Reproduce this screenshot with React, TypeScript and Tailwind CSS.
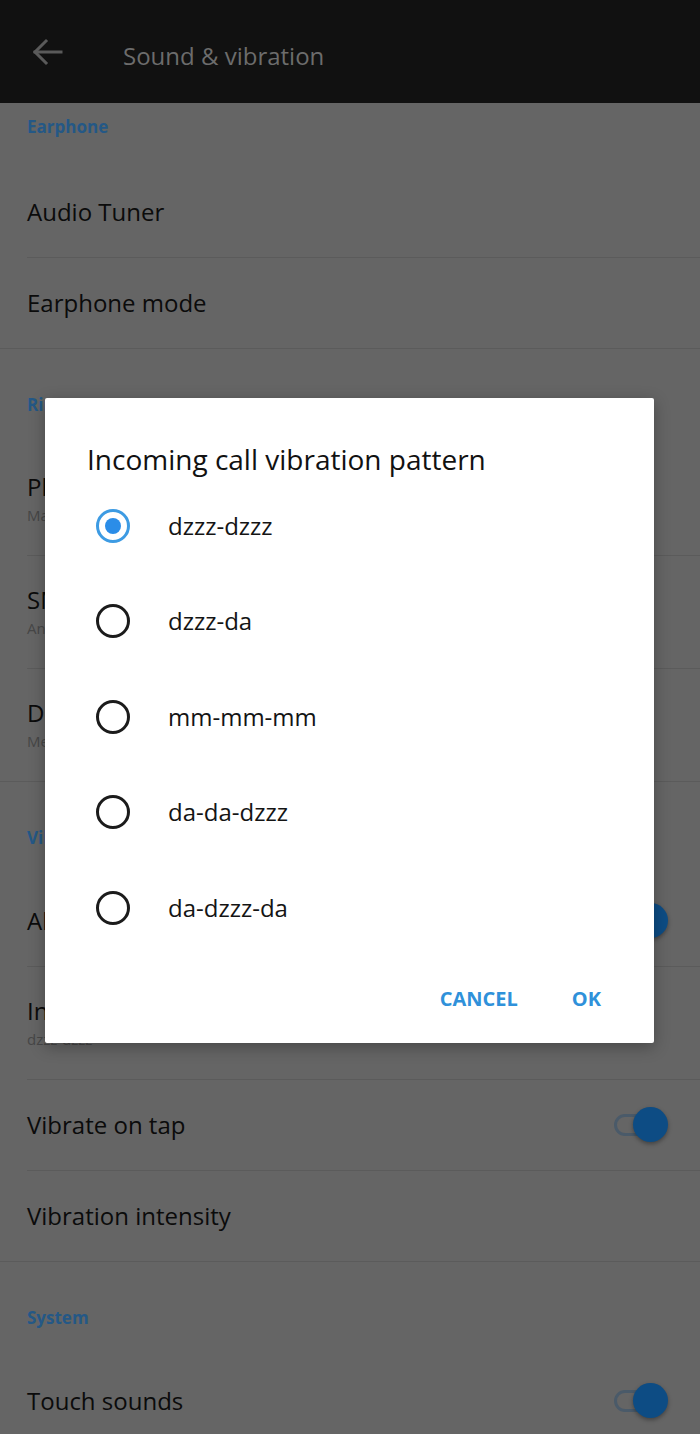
import React from "react";

type Row = {
  id: string;
  title: string;
  sub?: string;
  toggle?: boolean;
};

type Section = {
  id: string;
  name: string;
  first?: boolean;
  rows: Row[];
};

const sections: Section[] = [
  {
    id: "earphone",
    name: "Earphone",
    first: true,
    rows: [
      { id: "tuner", title: "Audio Tuner" },
      { id: "mode", title: "Earphone mode" },
    ],
  },
  {
    id: "ringtone",
    name: "Ringtone",
    rows: [
      { id: "phone", title: "Phone ringtone", sub: "Material" },
      { id: "sms", title: "SMS ringtone", sub: "Antic" },
      { id: "notif", title: "Default notification sound", sub: "Meet" },
    ],
  },
  {
    id: "vibrate",
    name: "Vibrate",
    rows: [
      { id: "also", title: "Also vibrate for calls", toggle: true },
      { id: "pattern", title: "Incoming call vibration pattern", sub: "dzzz-dzzz" },
      { id: "tap", title: "Vibrate on tap", toggle: true },
      { id: "intensity", title: "Vibration intensity" },
    ],
  },
  {
    id: "system",
    name: "System",
    rows: [{ id: "touch", title: "Touch sounds", toggle: true }],
  },
];

const patterns = ["dzzz-dzzz", "dzzz-da", "mm-mm-mm", "da-da-dzzz", "da-dzzz-da"];

// dimmed switch, as seen behind the scrim
const Toggle = () => (
  <div className="relative w-[54px] h-[36px] flex items-center">
    <div className="w-[40px] h-[22px] rounded-full border-[3px] border-[#4a5a69]" />
    <div className="absolute right-0 top-0 w-[35px] h-[35px] rounded-full bg-[#0d4c84] shadow-[0_2px_4px_rgba(0,0,0,0.35)]" />
  </div>
);

const Radio: React.FC<{ checked?: boolean }> = ({ checked }) =>
  checked ? (
    <div className="w-[34px] h-[34px] rounded-full border-[3.5px] border-[#3d9be3] flex items-center justify-center">
      <div className="w-[16px] h-[16px] rounded-full bg-[#2b8de8]" />
    </div>
  ) : (
    <div className="w-[34px] h-[34px] rounded-full border-[3.5px] border-[#1b1b1b]" />
  );

export default function App() {
  return (
    <div className="relative w-[700px] h-[1434px] overflow-hidden bg-[#656565] font-['Open_Sans','Noto_Sans',sans-serif]">
      {/* Top bar */}
      <div className="h-[103px] bg-[#111111] flex items-center">
        <svg
          className="ml-[32px] mt-[1px]"
          width="32"
          height="28"
          viewBox="0 0 32 28"
          fill="none"
          stroke="#5a5a5a"
          strokeWidth="3"
          strokeLinecap="square"
        >
          <path d="M3 14 H29" />
          <path d="M14 3 L3 14 L14 25" />
        </svg>
        <h1 className="ml-[59px] mt-[8px] text-[24px] text-[#6c6c6c] leading-none">
          Sound &amp; vibration
        </h1>
      </div>

      {/* Settings list */}
      {sections.map((s, si) => (
        <div key={s.id}>
          <div
            className={`px-[27px] text-[17px] font-bold text-[#245886] leading-[20px] ${
              s.first ? "h-[64px] pt-[14px]" : "h-[94px] pt-[46px]"
            }`}
          >
            {s.name}
          </div>
          {s.rows.map((r, ri) => {
            const last = ri === s.rows.length - 1;
            return (
              <div key={r.id}>
                <div
                  className={`flex items-center justify-between pl-[27px] pr-[32px] ${
                    r.sub ? "h-[112px]" : "h-[90px]"
                  }`}
                >
                  <div className="flex flex-col">
                    <span className="text-[24px] leading-[30px] text-[#0b0b0b] whitespace-nowrap">
                      {r.title}
                    </span>
                    {r.sub && (
                      <span className="text-[15px] leading-[22px] mt-[2px] text-[#474747]">
                        {r.sub}
                      </span>
                    )}
                  </div>
                  {r.toggle && <Toggle />}
                </div>
                {si < sections.length - 1 || !last ? (
                  <div className={`h-[1px] bg-[#5b5b5b] ${last ? "" : "ml-[27px]"}`} />
                ) : null}
              </div>
            );
          })}
        </div>
      ))}

      {/* Dialog */}
      <div className="absolute left-[45px] top-[398px] w-[609px] h-[645px] bg-white rounded-[2px] shadow-[0_4px_16px_rgba(0,0,0,0.3)] flex flex-col">
        <h2 className="pt-[43px] pl-[42px] h-[80px] text-[28px] leading-[36px] text-[#111111] whitespace-nowrap">
          Incoming call vibration pattern
        </h2>
        {patterns.map((p, i) => (
          <div key={p} className="h-[95.5px] flex items-center pl-[51px]">
            <Radio checked={i === 0} />
            <span className="ml-[38px] text-[24px] text-[#141414] leading-none">{p}</span>
          </div>
        ))}
        <div className="flex-1 flex items-center justify-end pr-[53px] gap-[54px]">
          <span className="text-[20px] font-bold text-[#2f91da]">CANCEL</span>
          <span className="text-[20px] font-bold text-[#2f91da]">OK</span>
        </div>
      </div>
    </div>
  );
}
